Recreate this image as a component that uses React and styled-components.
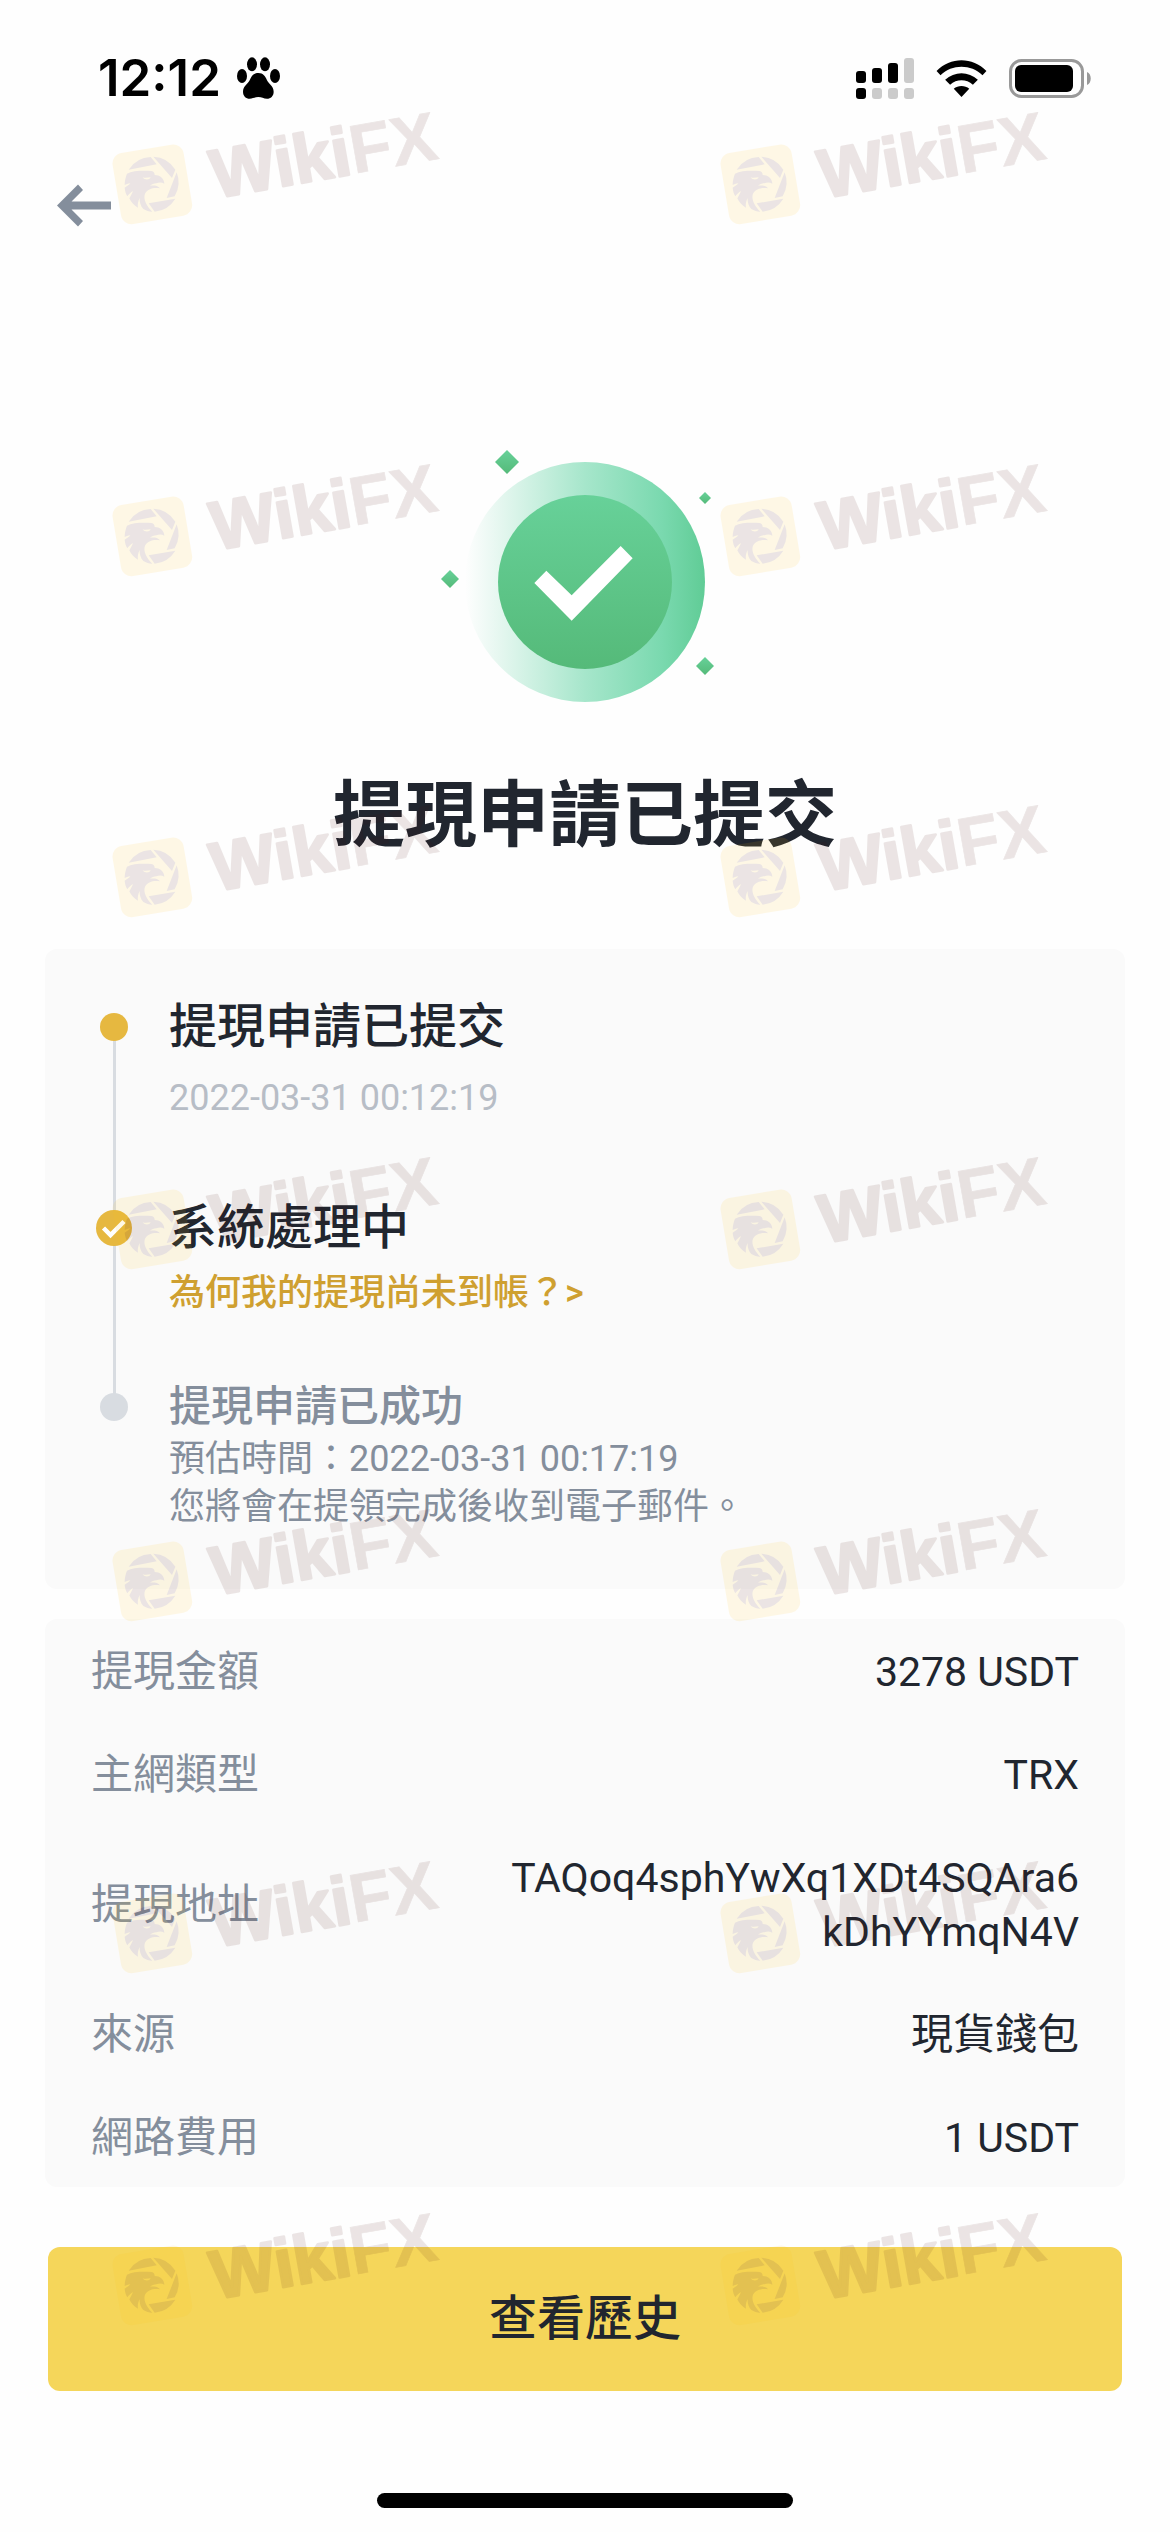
import React from 'react'
import styled, { createGlobalStyle } from 'styled-components'

const GlobalStyle = createGlobalStyle`
  * {
    box-sizing: border-box;
  }

  body {
    margin: 0;
    background: #fefefe;
    color: #21262f;
    font-family: Roboto, 'Noto Sans CJK TC', sans-serif;
  }
`

const Screen = styled.div`
  position: relative;
  display: flex;
  flex-direction: column;
  min-height: 100vh;
  overflow: hidden;
`

const StatusBar = styled.header`
  display: flex;
  align-items: center;
  justify-content: space-between;
  height: 156px;
  padding: 0 78px 0 98px;
`

const StatusGroup = styled.div`
  display: flex;
  align-items: center;
  gap: ${(props) => props.$gap}px;
`

const Time = styled.span`
  color: #000;
  font: 600 51px/60px Inter, sans-serif;
`

const Nav = styled.nav`
  display: flex;
  padding: 28px 56px 0;
`

const BackButton = styled.button`
  display: flex;
  padding: 0;
  border: 0;
  background: none;
`

const Hero = styled.section`
  display: flex;
  flex-direction: column;
  align-items: center;
  padding-top: 220px;
`

const HeroTitle = styled.h1`
  margin: 49px 0 83px;
  font-size: 72px;
  font-weight: 700;
  line-height: 100px;
`

const Card = styled.section`
  margin: 0 45px;
  border-radius: 12px;
  background: #fafafa;
`

const Timeline = styled.ol`
  display: flex;
  flex-direction: column;
  margin: 0;
  padding: 48px 46px 58px;
  list-style: none;
`

const Step = styled.li`
  position: relative;
  display: flex;
  gap: 32px;
  padding-bottom: ${(props) => props.$space || 0}px;

  &:not(:last-child)::before {
    content: '';
    position: absolute;
    top: 30px;
    bottom: -30px;
    left: 22px;
    width: 3px;
    background: #d8dce1;
  }
`

const Marker = styled.div`
  position: relative;
  display: flex;
  align-items: center;
  justify-content: center;
  flex: none;
  width: 46px;
  height: ${(props) => (props.$small ? 56 : 60)}px;
`

const Dot = styled.span`
  width: 28px;
  height: 28px;
  border-radius: 50%;
  background: ${(props) => props.$color};
`

const StepTitle = styled.h2`
  margin: 0;
  color: ${(props) => (props.$muted ? '#848e9c' : '#21262f')};
  font-size: ${(props) => (props.$muted ? 42 : 48)}px;
  font-weight: 500;
  line-height: ${(props) => (props.$muted ? 56 : 60)}px;
`

const StepDate = styled.time`
  display: block;
  margin-top: 17px;
  color: #b7bdc6;
  font-size: 36px;
  line-height: 48px;
`

const StepLink = styled.a`
  display: block;
  margin-top: 11px;
  color: #cfa030;
  font-size: 36px;
  font-weight: 500;
  line-height: 48px;
  text-decoration: none;
`

const StepNote = styled.p`
  margin: 0;
  color: #848e9c;
  font-size: 36px;
  line-height: 48px;
`

const Details = styled.dl`
  display: flex;
  flex-direction: column;
  gap: 49px;
  margin: 30px 45px 0;
  padding: 26px 46px 22px;
  border-radius: 12px;
  background: #fafafa;
`

const DetailRow = styled.div`
  display: flex;
  align-items: center;
  justify-content: space-between;
  line-height: 54px;
`

const DetailLabel = styled.dt`
  color: #848e9c;
  font-size: 42px;
`

const DetailValue = styled.dd`
  max-width: 575px;
  margin: 0;
  font-size: ${(props) => (props.$cjk ? 42 : 41)}px;
  text-align: right;
  word-break: break-all;
`

const HistoryButton = styled.button`
  height: 144px;
  margin: 60px 48px 0;
  border: 0;
  border-radius: 12px;
  background: #f5d65a;
  color: #21262f;
  font: 500 48px/60px Roboto, 'Noto Sans CJK TC', sans-serif;
`

const HomeIndicator = styled.div`
  width: 416px;
  height: 15px;
  margin: auto auto 24px;
  border-radius: 8px;
  background: #000;
`

const Watermarks = styled.div`
  position: absolute;
  inset: 0;
  display: grid;
  grid-template-columns: repeat(2, 52vw);
  grid-template-rows: 352px 341px repeat(5, 352px);
  padding: 90px 0 0 112px;
  overflow: hidden;
  pointer-events: none;
`

const steps = {
  submitted: '提現申請已提交',
  processing: '系統處理中',
  done: '提現申請已成功',
}

const details = [
  { label: '提現金額', value: '3278 USDT' },
  { label: '主網類型', value: 'TRX' },
  { label: '提現地址', value: 'TAQoq4sphYwXq1XDt4SQAra6kDhYYmqN4V' },
  { label: '來源', value: '現貨錢包', cjk: true },
  { label: '網路費用', value: '1 USDT' },
]

function PawIcon() {
  return (
    <svg width="43" height="42" viewBox="591 82 129 126" aria-hidden="true">
      <ellipse cx="606" cy="139" rx="15" ry="21" />
      <ellipse cx="636" cy="104" rx="15" ry="21" />
      <ellipse cx="675" cy="104" rx="15" ry="21" />
      <ellipse cx="705" cy="139" rx="15" ry="21" />
      <path d="M655 130c15 0 21 10 26 22 5 11 20 18 20 34 0 13-9 21-20 21-10 0-16-5-26-5s-16 5-26 5c-11 0-20-8-20-21 0-16 15-23 20-34 5-12 11-22 26-22z" />
    </svg>
  )
}

function SignalIcon() {
  return (
    <svg width="58" height="41" viewBox="0 0 58 41" aria-hidden="true">
      <rect x="0" y="13" width="10" height="12" rx="3" />
      <rect x="16" y="10" width="10" height="15" rx="3" />
      <rect x="32" y="5" width="10" height="20" rx="3" />
      <rect x="48" y="0" width="10" height="25" rx="3" fill="#cbcbcb" />
      <rect x="0" y="30" width="10" height="11" rx="3" />
      <rect x="16" y="30" width="10" height="11" rx="3" fill="#cbcbcb" />
      <rect x="32" y="30" width="10" height="11" rx="3" fill="#cbcbcb" />
      <rect x="48" y="30" width="10" height="11" rx="3" fill="#cbcbcb" />
    </svg>
  )
}

function WifiIcon() {
  return (
    <svg width="51" height="37" viewBox="708 86 153 112" aria-hidden="true">
      <path d="M709 119C751 76 818 76 860 119L848 132C813 98 756 98 721 132Z" />
      <path d="M735 146C763 119 806 119 834 146L819 161C799 143 770 143 750 161Z" />
      <path d="M761 173C774 162 795 162 808 173L784.500 198Z" />
    </svg>
  )
}

function BatteryIcon() {
  return (
    <svg width="83" height="39" viewBox="0 0 83 39" aria-hidden="true">
      <rect x="1.500" y="1.500" width="72" height="36" rx="11" fill="none" stroke="#999" strokeWidth="3" />
      <rect x="6" y="6" width="58" height="27" rx="6" />
      <path d="M78 13c5 2 5 11 0 13z" fill="#999" />
    </svg>
  )
}

function BackIcon() {
  return (
    <svg width="55" height="43" viewBox="0 0 55 43" fill="#848e9c" aria-hidden="true">
      <path d="M1 21.500L22 0.500L27 6L15.500 17.500H55V25.500H15.500L27 37L22 42.500Z" />
    </svg>
  )
}

function SuccessIcon() {
  return (
    <svg width="290" height="270" viewBox="60 51 870 810" aria-hidden="true">
      <defs>
        <linearGradient id="ring" x1="0" y1="0" x2="1" y2="0">
          <stop offset="0" stopColor="#fefefe" />
          <stop offset="0.1" stopColor="#edf9f4" />
          <stop offset="0.5" stopColor="#a6e6cb" />
          <stop offset="0.82" stopColor="#7ad9af" />
          <stop offset="1" stopColor="#60cc96" />
        </linearGradient>
        <linearGradient id="disc" x1="0" y1="0" x2="0" y2="1">
          <stop offset="0" stopColor="#67d199" />
          <stop offset="1" stopColor="#55ba79" />
        </linearGradient>
      </defs>
      <circle cx="495" cy="456" r="360" fill="url(#ring)" />
      <circle cx="495" cy="456" r="261" fill="url(#disc)" />
      <path d="M343 459l36-37 76 74 147-148 36 37-183 187z" fill="#fff" />
      <path d="M261 60l36 36-36 36-36-36z" fill="url(#disc)" />
      <path d="M90 420l27 27-27 27-27-27z" fill="url(#disc)" />
      <path d="M855 186l18 18-18 18-18-18z" fill="url(#disc)" />
      <path d="M855 681l27 27-27 27-27-27z" fill="url(#disc)" />
    </svg>
  )
}

function CheckedDot() {
  return (
    <svg width="36" height="36" viewBox="0 0 36 36" aria-hidden="true">
      <circle cx="18" cy="18" r="18" fill="#e6b840" />
      <path d="M7.500 18L14.500 25L28 11.500" fill="none" stroke="#fff" strokeWidth="4.500" />
    </svg>
  )
}

function Watermark() {
  return (
    <svg width="360" height="140" viewBox="60 -15 1080 420" opacity="0.1" aria-hidden="true">
      <rect x="73" y="160" width="216" height="216" rx="32" fill="#ffc414" transform="rotate(-9.500 181 268)" />
      <g fill="#4b0f0a">
        {/* shutter blades */}
        <path d="M110 224A82 82 0 0 1 176 186L194 208Z" />
        <path d="M184 185A82 82 0 0 1 250 224L240 249Z" />
        <path d="M254 232A82 82 0 0 1 248 304L224 309Z" />
        <path d="M170 325L250 311A82 82 0 0 1 188 350Z" />
        {/* eagle head */}
        <path d="M105 236C122 227 150 227 178 228C186 229 188 236 188 240C203 240 216 250 217 266C209 261 200 262 193 265C186 265 179 268 174 272C184 271 198 271 204 280C187 276 166 281 159 296C153 312 163 332 181 350C171 350 162 347 154 342C146 334 142 320 143 309C138 318 136 330 138 338C126 331 117 321 112 310C117 301 121 294 123 288C115 293 109 299 106 304C101 296 99 287 98 278C105 273 111 270 115 265C108 266 102 268 98 270C98 258 101 246 105 236Z" />
        <path d="M152 247C160 250 168 248 176 247C172 256 158 256 152 247Z" fill="#ffc414" />
      </g>
      <text
        x="370"
        y="303"
        transform="rotate(-10 408 306)"
        fontFamily="'Liberation Sans', Arial, sans-serif"
        fontSize="206"
        fontWeight="700"
        fill="#4b0f0a"
        stroke="#4b0f0a"
        strokeWidth="8"
        strokeLinejoin="round"
      >
        Wiki
        <tspan strokeWidth="2">FX</tspan>
      </text>
    </svg>
  )
}

function App() {
  return (
    <>
      <GlobalStyle />
      <Screen>
        <StatusBar>
          <StatusGroup $gap={16}>
            <Time>12:12</Time>
            <PawIcon />
          </StatusGroup>
          <StatusGroup $gap={22}>
            <SignalIcon />
            <WifiIcon />
            <BatteryIcon />
          </StatusGroup>
        </StatusBar>
        <Nav>
          <BackButton type="button" aria-label="返回">
            <BackIcon />
          </BackButton>
        </Nav>
        <Hero>
          <SuccessIcon />
          <HeroTitle>{steps.submitted}</HeroTitle>
        </Hero>
        <Card>
          <Timeline>
            <Step $space={76}>
              <Marker>
                <Dot $color="#e6b840" />
              </Marker>
              <div>
                <StepTitle>{steps.submitted}</StepTitle>
                <StepDate>2022-03-31 00:12:19</StepDate>
              </div>
            </Step>
            <Step $space={62}>
              <Marker>
                <CheckedDot />
              </Marker>
              <div>
                <StepTitle>{steps.processing}</StepTitle>
                <StepLink href="#">為何我的提現尚未到帳？&gt;</StepLink>
              </div>
            </Step>
            <Step>
              <Marker $small>
                <Dot $color="#d8dce1" />
              </Marker>
              <div>
                <StepTitle $muted>{steps.done}</StepTitle>
                <StepNote>預估時間：2022-03-31 00:17:19</StepNote>
                <StepNote>您將會在提領完成後收到電子郵件。</StepNote>
              </div>
            </Step>
          </Timeline>
        </Card>
        <Details>
          {details.map((item) => (
            <DetailRow key={item.label}>
              <DetailLabel>{item.label}</DetailLabel>
              <DetailValue $cjk={item.cjk}>{item.value}</DetailValue>
            </DetailRow>
          ))}
        </Details>
        <HistoryButton type="button">查看歷史</HistoryButton>
        <HomeIndicator />
        <Watermarks>
          {Array.from({ length: 14 }, (_, i) => (
            <Watermark key={i} />
          ))}
        </Watermarks>
      </Screen>
    </>
  )
}

export default App
